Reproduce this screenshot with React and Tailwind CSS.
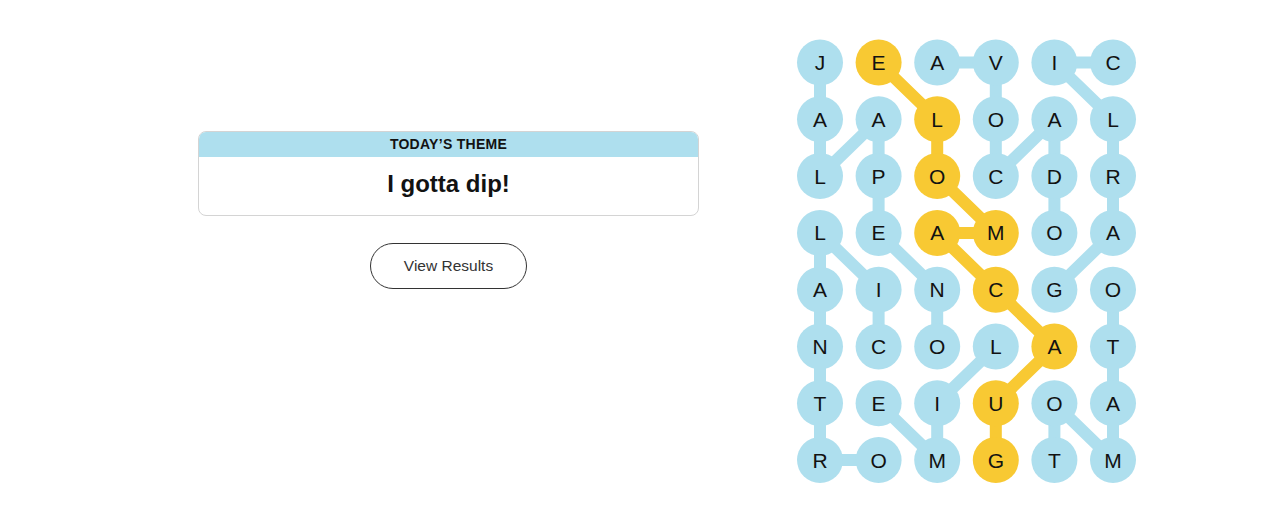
const grid = [
  "JEAVIC",
  "AALOAL",
  "LPOCDR",
  "LEAMOA",
  "AINCGO",
  "NCOLAT",
  "TEIUOA",
  "ROMGTM",
];

// words as paths of [row, col]
const blueWords = [
  [[0, 0], [1, 0], [2, 0], [1, 1], [2, 1], [3, 1], [4, 2], [5, 2]],
  [[5, 1], [4, 1], [3, 0], [4, 0], [5, 0], [6, 0], [7, 0], [7, 1]],
  [[0, 2], [0, 3], [1, 3], [2, 3], [1, 4], [2, 4], [3, 4]],
  [[4, 4], [3, 5], [2, 5], [1, 5], [0, 4], [0, 5]],
  [[7, 4], [6, 4], [7, 5], [6, 5], [5, 5], [4, 5]],
  [[5, 3], [6, 2], [7, 2], [6, 1]],
];

const spangram = [[7, 3], [6, 3], [5, 4], [4, 3], [3, 2], [3, 3], [2, 2], [1, 2], [0, 1]];

const BLUE = "#aedfee";
const YELLOW = "#f8c933";

const cx = (c) => 30 + c * 58.6;
const cy = (r) => 32.5 + r * 56.8;

function toPoints(path) {
  return path.map(([r, c]) => `${cx(c)},${cy(r)}`).join(" ");
}

function Board() {
  const yellowSet = new Set(spangram.map(([r, c]) => `${r}-${c}`));
  return (
    <svg width="360" height="470" viewBox="0 0 360 470" className="block">
      {blueWords.map((w, i) => (
        <polyline key={i} points={toPoints(w)} fill="none" stroke={BLUE} strokeWidth="12" strokeLinejoin="round" />
      ))}
      <polyline points={toPoints(spangram)} fill="none" stroke={YELLOW} strokeWidth="12" strokeLinejoin="round" />
      {grid.map((row, r) =>
        row.split("").map((ch, c) => (
          <g key={`${r}-${c}`}>
            <circle cx={cx(c)} cy={cy(r)} r="23" fill={yellowSet.has(`${r}-${c}`) ? YELLOW : BLUE} />
            <text
              x={cx(c)}
              y={cy(r) + 7.5}
              textAnchor="middle"
              fontSize="21"
              fill="#121212"
              style={{ fontFamily: '"Liberation Sans", Arial, sans-serif' }}
            >
              {ch}
            </text>
          </g>
        ))
      )}
    </svg>
  );
}

export default function App() {
  return (
    <div className="flex h-[528px] w-full bg-white font-['Liberation_Sans',Arial,sans-serif] text-[#121212]">
      <div className="ml-[198px] flex w-[501px] flex-col items-center pt-[131px]">
        <div className="w-full overflow-hidden rounded-lg border border-[#d4d4d4]">
          <div className="flex h-[25px] items-center justify-center bg-[#aedfee] text-[14px] font-bold tracking-[0.02em]">
            TODAY’S THEME
          </div>
          <div className="flex h-[58px] items-center justify-center pb-[4px] text-[24px] font-bold">I gotta dip!</div>
        </div>
        <button className="mt-[27px] h-[46px] w-[157px] rounded-full border border-[#333] text-[15.5px] text-[#333]">
          View Results
        </button>
      </div>
      <div className="ml-[91px] pt-[30px]">
        <Board />
      </div>
    </div>
  );
}
